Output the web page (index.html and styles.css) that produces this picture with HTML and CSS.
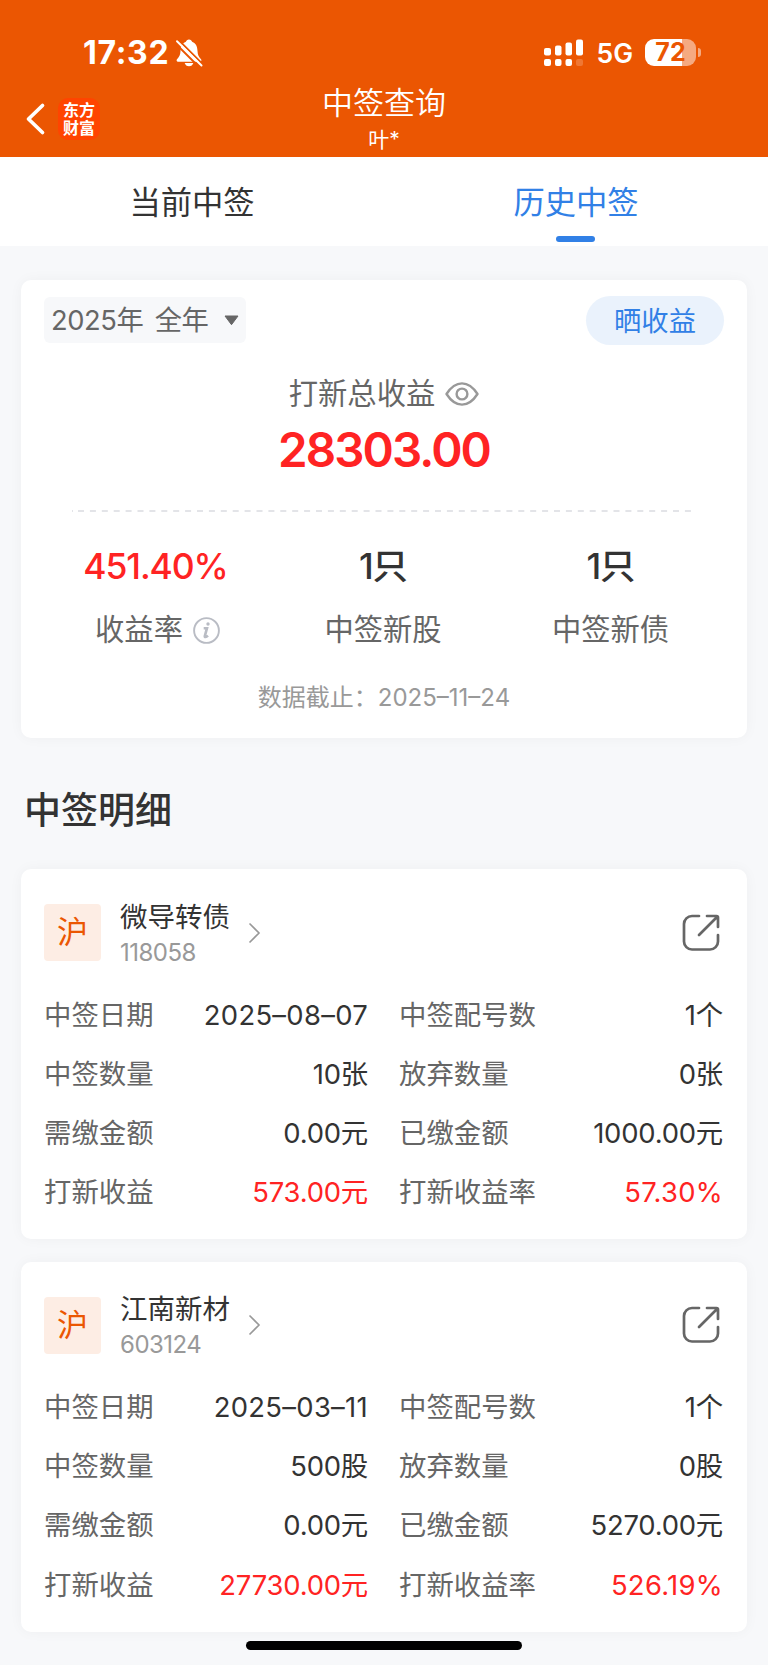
FILE: index.html
```html
<!DOCTYPE html>
<html lang="zh-CN">
<head>
    <meta charset="UTF-8">
    <meta name="viewport" content="width=device-width, initial-scale=1.0">
    <title>中签查询</title>
    <link rel="stylesheet" href="styles.css">
</head>
<body>
    <header class="header">
        <div class="status-bar">
            <span class="time">17:32</span>
            <svg class="bell" width="28" height="30" viewBox="0 0 28 30">
                <path d="M14 1.500c-1.700 0-2.700 1-3.100 2.300C6.800 5.300 5.800 8.500 5.500 13c-.2 4-1.300 5.800-3.500 8.300-.8 1.100-.4 2.400 1 2.400h22c1.400 0 1.800-1.300 1-2.400-2.200-2.500-3.300-4.300-3.500-8.300-.3-4.500-1.300-7.700-5.400-9.200C16.700 2.500 15.700 1.500 14 1.500z" fill="#fff"/>
                <path d="M9.700 25h8.600c-.5 2-2.200 3.300-4.300 3.300S10.200 27 9.700 25z" fill="#fff"/>
                <path d="M-.5 4.500L24.500 29.500M3.500 2L28.500 27" stroke="#eb5602" stroke-width="1.800"/>
                <path d="M2 3.300L26.500 27.500" stroke="#fff" stroke-width="2" stroke-linecap="round"/>
            </svg>
            <div class="status-right">
                <svg class="signal" width="40" height="28" viewBox="0 0 40 28" fill="#fff">
                    <rect x="0" y="9" width="7" height="7.500" rx="2"/>
                    <rect x="11" y="6.500" width="6.500" height="10" rx="2"/>
                    <rect x="21.500" y="3.500" width="6.500" height="13" rx="2"/>
                    <rect x="32" y="0.500" width="7" height="16" rx="2"/>
                    <rect x="0" y="20" width="7" height="7" rx="2"/>
                    <rect x="11" y="20" width="6.500" height="7" rx="2"/>
                    <rect x="21.500" y="20" width="6.500" height="7" rx="2"/>
                    <rect x="32" y="20" width="7" height="7" rx="2" opacity=".2"/>
                </svg>
                <span class="network">5G</span>
                <span class="battery">72</span>
                <span class="battery-tip"></span>
            </div>
        </div>
        <div class="nav-bar">
            <div class="nav-left">
                <svg class="back" width="19" height="32" viewBox="0 0 19 32">
                    <path d="M17.500 2.500L3.500 16L17.500 29.500" fill="none" stroke="#fff" stroke-width="3.700" stroke-linecap="round" stroke-linejoin="round"/>
                </svg>
                <div class="logo">东方<br>财富</div>
            </div>
            <div class="nav-title">
                <h1>中签查询</h1>
                <p>叶*</p>
            </div>
        </div>
    </header>

    <nav class="tabs">
        <a class="tab">当前中签</a>
        <a class="tab active">历史中签</a>
    </nav>

    <main>
        <section class="card summary">
            <div class="summary-top">
                <div class="year-select">
                    <span>2025年 全年</span>
                    <svg width="15" height="11" viewBox="0 0 15 11"><path d="M1 1h13L7.500 9.700z" fill="#666" stroke="#666" stroke-width="1" stroke-linejoin="round"/></svg>
                </div>
                <div class="share-btn">晒收益</div>
            </div>

            <div class="total-label">
                <span>打新总收益</span>
                <svg width="34" height="24" viewBox="0 0 34 24" fill="none" stroke="#999" stroke-width="2.400">
                    <path d="M1.500 12C6 5 11 1.400 17 1.400S28 5 32.500 12C28 19 23 22.600 17 22.600S6 19 1.500 12z" stroke-linejoin="round"/>
                    <circle cx="17" cy="12" r="5.400"/>
                </svg>
            </div>
            <div class="total-value">28303.00</div>

            <svg class="divider" width="621" height="2" viewBox="0 0 621 2"><path d="M0 1h1M6 1h615" stroke="#e3e4e8" stroke-width="2" stroke-dasharray="6 5.900"/></svg>

            <div class="stats">
                <div class="stat">
                    <div class="stat-value red">451.40%</div>
                    <div class="stat-label">
                        收益率
                        <svg width="27" height="27" viewBox="0 0 27 27" fill="none" stroke="#b9bcc4">
                            <circle cx="13.500" cy="13.500" r="12.400" stroke-width="1.900"/>
                            <path d="M10.700 11.200h3.300L11.800 19.200c-.3 1.200 1.200 1.200 3.200-.6" stroke-width="2.600"/>
                            <circle cx="15" cy="7" r="1.700" fill="#b9bcc4" stroke="none"/>
                        </svg>
                    </div>
                </div>
                <div class="stat">
                    <div class="stat-value">1只</div>
                    <div class="stat-label">中签新股</div>
                </div>
                <div class="stat">
                    <div class="stat-value">1只</div>
                    <div class="stat-label">中签新债</div>
                </div>
            </div>
            <div class="deadline">数据截止：2025–11–24</div>
        </section>

        <h2>中签明细</h2>

        <section class="card detail">
            <div class="detail-head">
                <div class="market">沪</div>
                <div class="stock">
                    <div class="stock-name">微导转债</div>
                    <div class="stock-code">118058</div>
                </div>
                <svg class="arrow" width="13" height="22" viewBox="0 0 13 22"><path d="M1.500 1.500L11 11L1.500 20.500" fill="none" stroke="#999" stroke-width="1.600"/></svg>
                <svg class="export" width="38" height="38" viewBox="0 0 38 38" fill="none" stroke="#666" stroke-width="2.700" stroke-linecap="round" stroke-linejoin="round">
                    <path d="M17 2H10a8 8 0 0 0-8 8v17.500a8 8 0 0 0 8 8h18a8 8 0 0 0 8-8V21"/>
                    <path d="M25 2h9.500q1.500 0 1.500 1.500V13M35 3L17 21"/>
                </svg>
            </div>
            <div class="rows">
                <div class="row"><span>中签日期</span><b class="date">2025–08–07</b></div>
                <div class="row"><span>中签配号数</span><b>1个</b></div>
                <div class="row"><span>中签数量</span><b>10张</b></div>
                <div class="row"><span>放弃数量</span><b>0张</b></div>
                <div class="row"><span>需缴金额</span><b>0.00元</b></div>
                <div class="row"><span>已缴金额</span><b>1000.00元</b></div>
                <div class="row"><span>打新收益</span><b class="red">573.00元</b></div>
                <div class="row"><span>打新收益率</span><b class="red rate">57.30%</b></div>
            </div>
        </section>

        <section class="card detail">
            <div class="detail-head">
                <div class="market">沪</div>
                <div class="stock">
                    <div class="stock-name">江南新材</div>
                    <div class="stock-code">603124</div>
                </div>
                <svg class="arrow" width="13" height="22" viewBox="0 0 13 22"><path d="M1.500 1.500L11 11L1.500 20.500" fill="none" stroke="#999" stroke-width="1.600"/></svg>
                <svg class="export" width="38" height="38" viewBox="0 0 38 38" fill="none" stroke="#666" stroke-width="2.700" stroke-linecap="round" stroke-linejoin="round">
                    <path d="M17 2H10a8 8 0 0 0-8 8v17.500a8 8 0 0 0 8 8h18a8 8 0 0 0 8-8V21"/>
                    <path d="M25 2h9.500q1.500 0 1.500 1.500V13M35 3L17 21"/>
                </svg>
            </div>
            <div class="rows">
                <div class="row"><span>中签日期</span><b class="date">2025–03–11</b></div>
                <div class="row"><span>中签配号数</span><b>1个</b></div>
                <div class="row"><span>中签数量</span><b>500股</b></div>
                <div class="row"><span>放弃数量</span><b>0股</b></div>
                <div class="row"><span>需缴金额</span><b>0.00元</b></div>
                <div class="row"><span>已缴金额</span><b>5270.00元</b></div>
                <div class="row"><span>打新收益</span><b class="red">27730.00元</b></div>
                <div class="row"><span>打新收益率</span><b class="red rate">526.19%</b></div>
            </div>
        </section>
    </main>

    <div class="home-indicator"></div>
</body>
</html>
```

FILE: styles.css
```css
/* Reset and base styles */
* {
    margin: 0;
    padding: 0;
    box-sizing: border-box;
}

body {
    width: 768px;
    height: 1665px;
    overflow: hidden;
    font-family: Inter, "Noto Sans CJK SC", sans-serif;
    font-weight: 370;
    background-color: #f7f8fa;
    color: #333;
}

svg {
    display: block;
    flex-shrink: 0;
    overflow: visible;
}

/* Header */
.header {
    height: 157px;
    background-color: #eb5602;
    color: #fff;
}

.status-bar {
    display: flex;
    align-items: center;
    height: 84px;
    padding: 21px 67px 0 83px;
}

.time {
    font-size: 32px;
    font-weight: 750;
    letter-spacing: 0.7px;
    line-height: 40px;
}

.bell {
    margin-left: 6px;
}

.status-right {
    display: flex;
    align-items: center;
    margin-left: auto;
}

.network {
    margin-left: 12px;
    font-size: 26.500px;
    font-weight: 600;
    line-height: 30px;
}

.battery {
    width: 51px;
    height: 27px;
    margin-left: 12px;
    border-radius: 9px;
    background: linear-gradient(to right, #fff 72%, #f5aa81 72%);
    color: #eb5602;
    font-size: 25px;
    font-weight: 750;
    line-height: 27px;
    text-align: center;
}

.battery-tip {
    width: 3px;
    height: 9px;
    margin-left: 2px;
    border-radius: 0 4px 4px 0;
    background-color: #f5aa81;
}

.nav-bar {
    display: grid;
    grid-template-columns: 1fr auto 1fr;
    height: 73px;
}

.nav-left {
    display: flex;
    align-items: center;
    height: 69px;
    padding-left: 25px;
}

.logo {
    width: 42px;
    height: 42px;
    margin-left: 14px;
    padding-top: 3px;
    border-radius: 10px;
    background-color: #ff4400;
    font-size: 16px;
    font-weight: 700;
    line-height: 18px;
    text-align: center;
}

.nav-title {
    text-align: center;
}

.nav-title h1 {
    font-size: 31px;
    font-weight: 350;
    line-height: 37px;
}

.nav-title p {
    font-size: 21px;
    line-height: 38px;
}

/* Tabs */
.tabs {
    display: flex;
    height: 89px;
    background-color: #fff;
}

.tab {
    position: relative;
    flex: 1;
    font-size: 31.300px;
    line-height: 93px;
    text-align: center;
}

.tab.active {
    color: #3180e6;
}

.tab.active::after {
    content: "";
    position: absolute;
    top: 79px;
    left: 50%;
    width: 39px;
    height: 6px;
    margin-left: -20px;
    border-radius: 3px;
    background-color: #3180e6;
}

/* Cards */
main {
    padding: 34px 21px 0;
}

.card {
    border-radius: 10px;
    background-color: #fff;
    box-shadow: 0 0 14px rgba(0, 0, 0, 0.04);
}

/* Summary */
.summary {
    height: 458px;
    padding: 15px 23px 0;
}

.summary-top {
    display: flex;
    align-items: center;
    justify-content: space-between;
    height: 50px;
}

.year-select {
    display: flex;
    align-items: center;
    justify-content: space-between;
    width: 202px;
    height: 46px;
    padding: 0 7px;
    border-radius: 6px;
    background-color: #f7f8fa;
    color: #666;
    font-size: 27.300px;
    letter-spacing: -0.4px;
    word-spacing: 4px;
    line-height: 46px;
    white-space: nowrap;
}

.year-select span {
    padding-top: 2px;
}

.share-btn {
    width: 138px;
    height: 49px;
    border-radius: 25px;
    background-color: #eaf2fc;
    color: #3180e6;
    font-size: 27.300px;
    line-height: 51px;
    text-align: center;
}

.total-label {
    display: flex;
    align-items: center;
    justify-content: center;
    gap: 10px;
    margin-top: 29px;
    color: #666;
    font-size: 29.300px;
    line-height: 40px;
}

.total-value {
    margin-top: 6px;
    color: #ff2323;
    font-size: 47.500px;
    font-weight: 600;
    letter-spacing: -1.9px;
    line-height: 60px;
    text-align: center;
}

.divider {
    margin: 30px 0 0 28px;
}

.stats {
    display: grid;
    grid-template-columns: repeat(3, 227.500px);
    justify-content: center;
    margin: 30px 2px 0 0;
    text-align: center;
}

.stat-value {
    font-size: 35.500px;
    font-weight: 550;
    letter-spacing: -1.1px;
    line-height: 50px;
}

.stat-label {
    display: flex;
    align-items: center;
    justify-content: center;
    gap: 10px;
    margin-top: 18px;
    color: #666;
    font-size: 29.300px;
    line-height: 40px;
}

.stat:first-child .stat-label {
    padding-left: 4px;
}

.deadline {
    margin-top: 28px;
    color: #999;
    font-size: 24px;
    line-height: 40px;
    text-align: center;
}

h2 {
    height: 131px;
    padding: 44px 3px 0;
    font-size: 37px;
    font-weight: 500;
    line-height: 58px;
}

/* Detail cards */
.detail {
    height: 370px;
    margin-bottom: 22.500px;
    padding: 35px 23px 0;
}

.detail-head {
    display: flex;
    align-items: center;
    height: 57px;
}

.market {
    width: 57px;
    height: 57px;
    border-radius: 4px;
    background-color: #fdede4;
    color: #eb5602;
    font-size: 31px;
    line-height: 56px;
    text-align: center;
}

.stock {
    padding-top: 3px;
    margin-left: 19px;
}

.stock-name {
    font-size: 27.500px;
    line-height: 36px;
}

.stock-code {
    color: #999;
    font-size: 24px;
    letter-spacing: -0.5px;
    line-height: 35px;
}

.arrow {
    margin-left: 18px;
}

.export {
    margin: 0 4px 0 auto;
}

.rows {
    display: grid;
    grid-template-columns: 324px 324px;
    column-gap: 31px;
    margin-top: 24.500px;
}

.row {
    display: flex;
    justify-content: space-between;
    height: 59.200px;
    font-size: 27.400px;
    line-height: 59px;
}

.row span {
    color: #666;
}

.row b {
    font-weight: 380;
    letter-spacing: -0.2px;
}

.row b.date,
.row b.rate {
    letter-spacing: 0.3px;
}

.red {
    color: #ff2323;
}

/* iOS home indicator */
.home-indicator {
    position: absolute;
    top: 1641px;
    left: 246px;
    width: 276px;
    height: 9px;
    border-radius: 5px;
    background-color: #000;
}
```
